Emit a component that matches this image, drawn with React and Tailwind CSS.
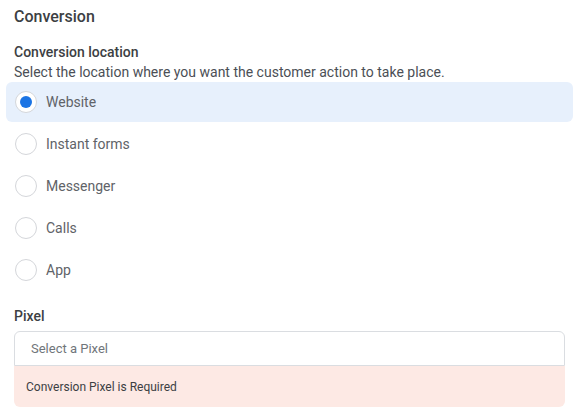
export default function App() {
  const options = ["Website", "Instant forms", "Messenger", "Calls", "App"];
  return (
    <div className="w-[576px] h-[414px] bg-white overflow-hidden" style={{ fontFamily: "Roboto, 'Liberation Sans', sans-serif" }}>
      <div className="pt-[7px] px-[14px]">
        <div className="text-[16px] leading-[20px] font-medium text-[#3c4043]">Conversion</div>
        <div className="mt-[15px] text-[14px] leading-[20px] font-medium text-[#3c4043]">Conversion location</div>
        <div className="text-[14px] leading-[20px] text-[#4b4f56]">Select the location where you want the customer action to take place.</div>
      </div>
      <div className="px-[6px] flex flex-col">
        {options.map((o, i) => (
          <div
            key={o}
            className={`flex items-center pl-[9px] rounded-[6px] ${i === 0 ? "bg-[#e7f0fc] w-[567px] h-[40px] mb-[1px]" : "h-[42px]"}`}
          >
            <div className="w-[22px] h-[22px] rounded-full border border-[#d4d6da] bg-white flex items-center justify-center">
              {i === 0 && <div className="w-[12px] h-[12px] rounded-full bg-[#1b74e4]" />}
            </div>
            <span className="ml-[9px] text-[14px] text-[#5f6368]">{o}</span>
          </div>
        ))}
      </div>
      <div className="px-[14px] mt-[15px]">
        <div className="text-[14px] leading-[20px] font-medium text-[#3c4043]">Pixel</div>
        <div className="mt-[5px] w-[551px]">
          <div className="h-[35px] border border-[#dadde1] rounded-t-[6px] flex items-center pl-[16px] text-[13px] text-[#70757a] bg-white">
            Select a Pixel
          </div>
          <div className="h-[41px] bg-[#fde9e4] rounded-b-[6px] flex items-center pl-[12px] text-[12px] text-[#3c4043]">
            Conversion Pixel is Required
          </div>
        </div>
      </div>
    </div>
  );
}
